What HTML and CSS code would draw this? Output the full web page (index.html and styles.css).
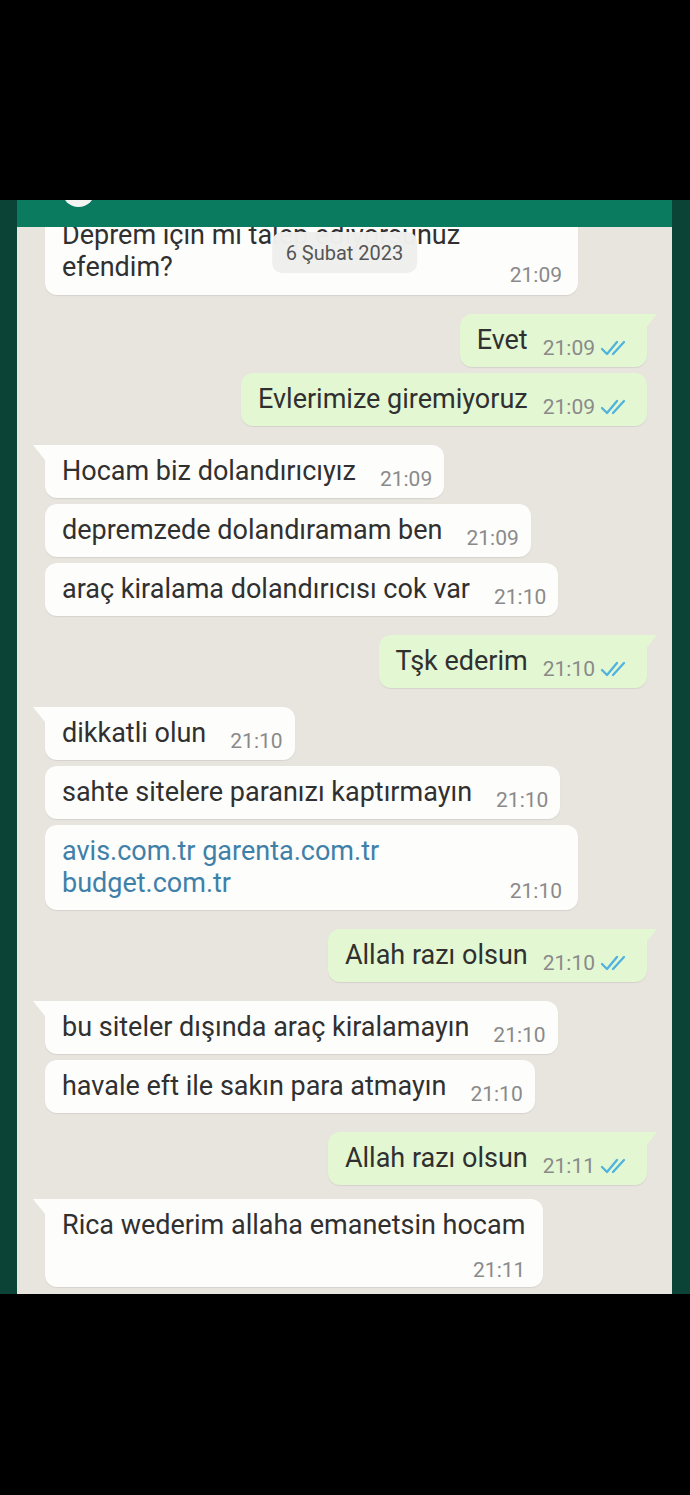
FILE: index.html
```html
<!DOCTYPE html>
<html lang="tr">
<head>
    <meta charset="UTF-8">
    <meta name="viewport" content="width=device-width, initial-scale=1.0">
    <title>Sohbet</title>
    <link rel="stylesheet" href="styles.css">
</head>
<body>
    <div class="phone">
        <header class="topbar">
            <span class="avatar"></span>
        </header>
        <main class="chat">
            <div class="date-pill">6 Şubat 2023</div>
            <div class="messages">
                <div class="msg in wide">
                    <span class="text">Deprem için mi talep ediyorsunuz<br>efendim?</span>
                    <span class="meta">21:09</span>
                </div>

                <div class="msg out tail">
                    <span class="text">Evet</span>
                    <span class="meta">21:09 <svg class="ticks" viewBox="0 0 28 16"><polyline points="2,9 7,14 17,2"/><polyline points="13,14 24,2"/></svg></span>
                </div>
                <div class="msg out">
                    <span class="text">Evlerimize giremiyoruz</span>
                    <span class="meta">21:09 <svg class="ticks" viewBox="0 0 28 16"><polyline points="2,9 7,14 17,2"/><polyline points="13,14 24,2"/></svg></span>
                </div>

                <div class="msg in tail">
                    <span class="text">Hocam biz dolandırıcıyız</span>
                    <span class="meta">21:09</span>
                </div>
                <div class="msg in">
                    <span class="text">depremzede dolandıramam ben</span>
                    <span class="meta">21:09</span>
                </div>
                <div class="msg in">
                    <span class="text">araç kiralama dolandırıcısı cok var</span>
                    <span class="meta">21:10</span>
                </div>

                <div class="msg out tail">
                    <span class="text">Tşk ederim</span>
                    <span class="meta">21:10 <svg class="ticks" viewBox="0 0 28 16"><polyline points="2,9 7,14 17,2"/><polyline points="13,14 24,2"/></svg></span>
                </div>

                <div class="msg in tail">
                    <span class="text">dikkatli olun</span>
                    <span class="meta">21:10</span>
                </div>
                <div class="msg in">
                    <span class="text">sahte sitelere paranızı kaptırmayın</span>
                    <span class="meta">21:10</span>
                </div>
                <div class="msg in wide">
                    <span class="text"><a href="#">avis.com.tr</a> <a href="#">garenta.com.tr</a><br><a href="#">budget.com.tr</a></span>
                    <span class="meta">21:10</span>
                </div>

                <div class="msg out tail">
                    <span class="text">Allah razı olsun</span>
                    <span class="meta">21:10 <svg class="ticks" viewBox="0 0 28 16"><polyline points="2,9 7,14 17,2"/><polyline points="13,14 24,2"/></svg></span>
                </div>

                <div class="msg in tail">
                    <span class="text">bu siteler dışında araç kiralamayın</span>
                    <span class="meta">21:10</span>
                </div>
                <div class="msg in">
                    <span class="text">havale eft ile sakın para atmayın</span>
                    <span class="meta">21:10</span>
                </div>

                <div class="msg out tail">
                    <span class="text">Allah razı olsun</span>
                    <span class="meta">21:11 <svg class="ticks" viewBox="0 0 28 16"><polyline points="2,9 7,14 17,2"/><polyline points="13,14 24,2"/></svg></span>
                </div>

                <div class="msg in tail stacked">
                    <span class="text">Rica wederim allaha emanetsin hocam</span>
                    <span class="meta">21:11</span>
                </div>
            </div>
        </main>
    </div>
</body>
</html>
```

FILE: styles.css
```css
* {
    box-sizing: border-box;
}
body {
    margin: 0;
    height: 1495px;
    overflow: hidden;
    background-color: #000;
    font-family: Roboto, "Noto Sans", sans-serif;
}
.phone {
    margin-top: 200px;
    height: 1094px;
    display: flex;
    flex-direction: column;
    border-left: 17px solid #0b4437;
    border-right: 18px solid #0b4437;
}
.topbar {
    height: 27px;
    flex-shrink: 0;
    display: flex;
    overflow: hidden;
    background-color: #0b7b60;
}
.avatar {
    width: 33px;
    height: 33px;
    flex-shrink: 0;
    margin: -26px 0 0 45px;
    border-radius: 50%;
    background-color: #f3f5f3;
}
.chat {
    flex: 1;
    position: relative;
    overflow: hidden;
    padding: 0 25px 0 28px;
    background-color: #e8e4de;
}
.date-pill {
    position: absolute;
    top: 5px;
    left: 50%;
    transform: translateX(-50%);
    z-index: 2;
    padding: 9px 14px 8px;
    border-radius: 10px;
    background-color: rgba(239, 240, 238, 0.98);
    color: #555;
    font-size: 20px;
    line-height: 24px;
    white-space: nowrap;
}
.messages {
    display: flex;
    flex-direction: column;
    margin-top: -18px;
}
.msg {
    position: relative;
    display: flex;
    align-items: flex-start;
    max-width: 533px;
    margin-top: 6px;
    padding: 10px 12px 8px 17px;
    border-radius: 12px;
    color: #303030;
    box-shadow: 0 1px 1px rgba(0, 0, 0, 0.08);
}
.msg:first-child {
    margin-top: 0;
    padding-bottom: 9px;
}
.msg.in {
    align-self: flex-start;
    background-color: #fdfdfc;
}
.msg.out {
    align-self: flex-end;
    padding-right: 19px;
    background-color: #e3f7d3;
}
.msg.tail {
    margin-top: 19px;
}
.msg.tail::before {
    content: "";
    position: absolute;
    top: 0;
    width: 12px;
    height: 15px;
    background-color: inherit;
}
.msg.in.tail {
    border-top-left-radius: 0;
}
.msg.in.tail::before {
    left: -12px;
    clip-path: polygon(0 0, 100% 0, 100% 100%);
}
.msg.out.tail {
    border-top-right-radius: 0;
}
.msg.out.tail::before {
    right: -10px;
    clip-path: polygon(0 0, 100% 0, 0 100%);
}
.text {
    font-size: 27px;
    line-height: 32px;
}
.text a {
    color: #3f80a8;
    text-decoration: none;
}
.meta {
    display: flex;
    align-items: center;
    flex-shrink: 0;
    margin: 13px 0 0 24px;
    color: #8a8a8a;
    font-size: 21px;
    line-height: 22px;
    white-space: nowrap;
}
.out .meta {
    margin-left: 15px;
}
.ticks {
    width: 28px;
    height: 16px;
    margin-left: 5px;
    fill: none;
    stroke: #4fb3dd;
    stroke-width: 2.3;
    stroke-linecap: round;
    stroke-linejoin: round;
}
.msg.wide {
    width: 533px;
    padding-right: 16px;
}
.msg.wide .text {
    flex: 1;
    padding-bottom: 3px;
}
.msg.wide .meta {
    align-self: flex-end;
    margin-top: 0;
}
.msg.stacked {
    display: block;
    margin-top: 14px;
    padding-right: 18px;
    padding-bottom: 6px;
}
.msg.stacked .meta {
    justify-content: flex-end;
    margin: 18px 0 0 0;
}
```
